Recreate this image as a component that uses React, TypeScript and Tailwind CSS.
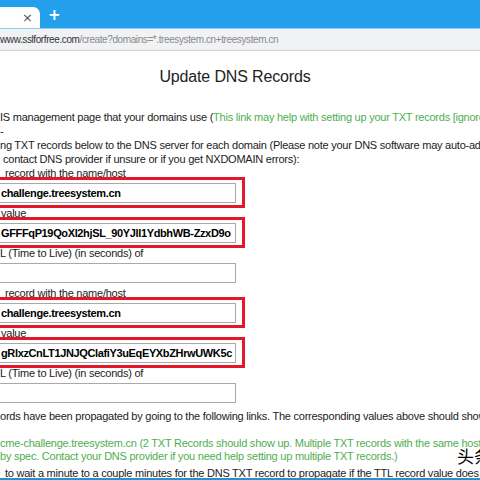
import React from "react";

const Field = ({ value, red }: { value?: string; red?: boolean }) => (
  <div className="relative my-[3px] w-[237px] -ml-px">
    <div className="h-[20px] border border-[#a9a9a9] bg-white flex items-center pl-px font-bold text-black text-[11px] tracking-[-0.36px] whitespace-nowrap overflow-hidden">
      {value}
    </div>
    {red && (
      <div className="absolute -left-[10px] -top-[6px] -bottom-[5px] -right-[9px] border-[3px] border-[#e5172a] pointer-events-none" />
    )}
  </div>
);

const Line = ({ children, className = "" }: { children: React.ReactNode; className?: string }) => (
  <div className={"h-[14px] leading-[14px] whitespace-nowrap " + className}>{children}</div>
);

export default function App() {
  return (
    <div className="relative w-[480px] h-[480px] overflow-hidden bg-white font-['Liberation_Sans',Arial,sans-serif]">
      {/* tab strip */}
      <div className="h-[28px] bg-[#22a0ec] flex items-end">
        <div className="w-[40px] h-[21px] bg-white rounded-tr-[7px] flex items-center justify-end pr-[7px] text-[#555] text-[13px] leading-none font-['DejaVu_Sans',sans-serif]">
          ×
        </div>
        <div className="ml-[8px] mb-[5px] text-white text-[15px] font-bold leading-none font-['DejaVu_Sans',sans-serif]">+</div>
      </div>
      <div className="h-px bg-[#8ccdf4]" />
      {/* address bar */}
      <div className="h-[22px] bg-[#f1f2f4] border-b border-[#cfcfcf] flex items-center whitespace-nowrap text-[10px] tracking-[-0.4px] font-['Liberation_Sans',Arial,sans-serif]">
        <span className="text-[#333]">www.sslforfree.com</span>
        <span className="text-[#8a8a8a]">/create?domains=*.treesystem.cn+treesystem.cn</span>
      </div>

      {/* page */}
      <div className="text-[11px] tracking-[-0.24px] text-[#222]">
        <div className="mt-[16px] h-[20px] leading-[20px] text-center pr-[10px] text-[16px] tracking-[-0.15px] text-[#222]">
          Update DNS Records
        </div>
        <div className="mt-[23px] flex flex-col">
          <Line>
            IS management page that your domains use (
            <span className="text-[#4fae4f]">This link may help with setting up your TXT records [ignore this if you know how]</span>
          </Line>
          <Line>-</Line>
          <Line>ng TXT records below to the DNS server for each domain (Please note your DNS software may auto-add the domain name)</Line>
          <Line className="pl-[3px]">contact DNS provider if unsure or if you get NXDOMAIN errors):</Line>
          <Line className="pl-[5px]">record with the name/host</Line>
          <Field value="challenge.treesystem.cn" red />
          <Line className="pl-[1px]">value</Line>
          <Field value="GFFFqP19QoXl2hjSL_90YJll1YdbhWB-ZzxD9o" red />
          <Line>L (Time to Live) (in seconds) of</Line>
          <Field />
          <Line className="pl-[5px]">record with the name/host</Line>
          <Field value="challenge.treesystem.cn" red />
          <Line className="pl-[1px]">value</Line>
          <Field value="gRlxzCnLT1JNJQClafiY3uEqEYXbZHrwUWK5c" red />
          <Line>L (Time to Live) (in seconds) of</Line>
          <Field />
          <Line className="mt-[3px]">ords have been propagated by going to the following links. The corresponding values above should show up.</Line>
          <div className="mt-[14px] text-[#4fae4f]">
            <div className="h-[13px] leading-[13px] whitespace-nowrap">
              cme-challenge.treesystem.cn (2 TXT Records should show up. Multiple TXT records with the same host are allowed
            </div>
            <div className="h-[13px] leading-[13px] whitespace-nowrap">
              by spec. Contact your DNS provider if you need help setting up multiple TXT records.)
            </div>
          </div>
          <Line className="mt-[3px] pl-[5px]">
            to wait a minute to a couple minutes for the DNS TXT record to propagate if the TTL record value does not change.
          </Line>
        </div>
      </div>

      {/* watermark */}
      <div className="absolute left-[457px] top-[447px] text-[17px] leading-none text-black whitespace-nowrap font-['Noto_Sans_CJK_SC',sans-serif]">
        头条
      </div>
      {/* bottom window edge */}
      <div className="absolute left-0 right-0 bottom-0 h-[2px] bg-[#2a8fd0]" />
    </div>
  );
}
